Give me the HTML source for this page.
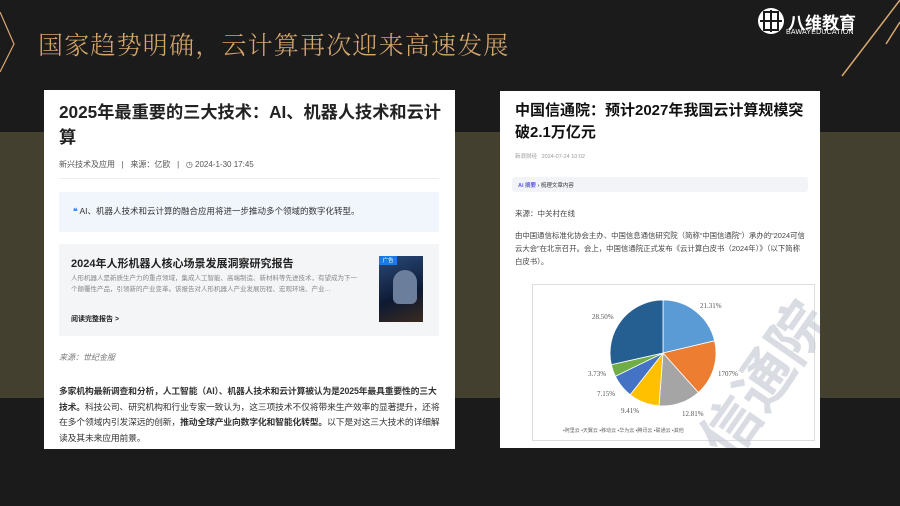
<!DOCTYPE html>
<html><head><meta charset="utf-8"><style>
*{margin:0;padding:0;box-sizing:border-box}
body{width:900px;height:506px;background:#1c1b1b;position:relative;overflow:hidden;font-family:"Liberation Sans","Noto Sans CJK SC",sans-serif}
.band{position:absolute;left:0;top:132px;width:900px;height:266px;background:#444030}
.title{position:absolute;left:38px;top:26px;font-size:25px;color:#d7a86e;letter-spacing:1.2px;font-family:"Noto Serif CJK SC","Noto Sans CJK SC",sans-serif;font-weight:300}
.card{position:absolute;background:#fff}
.c1{left:44px;top:90px;width:411px;height:359px}
.c2{left:500px;top:91px;width:320px;height:357px}
.abs{position:absolute}
</style></head><body>
<div class="band"></div>
<svg class="abs" style="left:0;top:0" width="900" height="506">
<polyline points="0,12 14,44 0,72" fill="none" stroke="#d7a86e" stroke-width="1.2"/>
<line x1="900" y1="0" x2="842" y2="76" stroke="#d7a86e" stroke-width="1.5"/>
<line x1="900" y1="22" x2="886" y2="44" stroke="#d7a86e" stroke-width="1.5"/>
<circle cx="771" cy="21" r="13" fill="#fff"/>
<rect x="764" y="12" width="14" height="18" fill="none" stroke="#1c1b1b" stroke-width="2"/>
<line x1="771" y1="10" x2="771" y2="32" stroke="#1c1b1b" stroke-width="2"/>
<line x1="760" y1="21" x2="782" y2="21" stroke="#1c1b1b" stroke-width="2"/>
</svg>
<div class="abs" style="left:788px;top:9px;color:#fff;font-size:17px;font-weight:bold">八维教育</div>
<div class="abs" style="left:786px;top:29px;color:#fff;font-size:7px;letter-spacing:0.2px">BAWAYEDUCATION</div>
<div class="title">国家趋势明确，云计算再次迎来高速发展</div>

<div class="card c1">
<div class="abs" style="left:15px;top:10px;width:385px;font-size:17.2px;font-weight:bold;color:#222;line-height:25px">2025年最重要的三大技术：AI、机器人技术和云计算</div>
<div class="abs" style="left:15px;top:69px;font-size:8px;color:#555">新兴技术及应用 &nbsp;&nbsp;|&nbsp;&nbsp; 来源：亿欧 &nbsp;&nbsp;|&nbsp;&nbsp; ◷ 2024-1-30 17:45</div>
<div class="abs" style="left:15px;top:88px;width:380px;height:1px;background:#eee"></div>
<div class="abs" style="left:15px;top:102px;width:380px;height:40px;background:#f1f6fc;font-size:8.5px;color:#333;padding:13px 0 0 14px"><b style="color:#3a8ee6">❝</b> AI、机器人技术和云计算的融合应用将进一步推动多个领域的数字化转型。</div>
<div class="abs" style="left:15px;top:154px;width:380px;height:92px;background:#f4f5f7">
<div class="abs" style="left:12px;top:11px;font-size:11px;font-weight:bold;color:#222">2024年人形机器人核心场景发展洞察研究报告</div>
<div class="abs" style="left:12px;top:29px;width:290px;font-size:6.5px;color:#888;line-height:11px">人形机器人是新质生产力的重点领域，集成人工智能、高端制造、新材料等先进技术，有望成为下一个颠覆性产品，引领新的产业变革。该报告对人形机器人产业发展历程、宏观环境、产业…</div>
<div class="abs" style="left:12px;top:70px;font-size:7px;color:#222;font-weight:bold">阅读完整报告 &gt;</div>
<div class="abs" style="left:320px;top:12px;width:44px;height:66px;background:linear-gradient(160deg,#2a4a7a,#0e1a33 60%,#3b2a1e)"><div style="width:18px;height:9px;background:#1a7ae6;color:#fff;font-size:5.5px;text-align:center">广告</div><div style="position:absolute;left:14px;top:14px;width:24px;height:34px;border-radius:12px 12px 6px 6px;background:#6b7f9c"></div></div>
</div>
<div class="abs" style="left:15px;top:262px;font-size:8px;color:#777;font-style:italic">来源：世纪金服</div>
<div class="abs" style="left:15px;top:294px;width:386px;font-size:8.8px;color:#333;line-height:15.5px;letter-spacing:-0.15px"><b>多家机构最新调查和分析，人工智能（AI）、机器人技术和云计算被认为是2025年最具重要性的三大技术。</b>科技公司、研究机构和行业专家一致认为，这三项技术不仅将带来生产效率的显著提升，还将在多个领域内引发深远的创新，<b>推动全球产业向数字化和智能化转型。</b>以下是对这三大技术的详细解读及其未来应用前景。</div>
</div>

<div class="card c2">
<div class="abs" style="left:15px;top:9px;width:300px;font-size:15px;font-weight:bold;color:#111;line-height:22px">中国信通院：预计2027年我国云计算规模突破2.1万亿元</div>
<div class="abs" style="left:15px;top:61px;font-size:5.5px;color:#999">新浪财经 &nbsp; 2024-07-24 10:02</div>
<div class="abs" style="left:12px;top:86px;width:296px;height:15px;background:#f3f4f7;border-radius:3px;font-size:5.5px;color:#333;padding:4px 0 0 6px"><span style="color:#5b5be0;font-weight:bold">Ai 摘要</span> › 梳理文章内容</div>
<div class="abs" style="left:15px;top:117px;font-size:7.5px;color:#444">来源：中关村在线</div>
<div class="abs" style="left:15px;top:138px;width:292px;font-size:7.4px;color:#444;line-height:13px">由中国通信标准化协会主办、中国信息通信研究院（简称“中国信通院”）承办的“2024可信云大会”在北京召开。会上，中国信通院正式发布《云计算白皮书（2024年）》（以下简称白皮书）。</div>
<div class="abs" style="left:32px;top:193px;width:283px;height:157px;border:1px solid #ddd;background:#fff"></div>
<svg class="abs" style="left:0;top:0" width="320" height="357" viewBox="500 91 320 357">
<text x="765" y="400" text-anchor="middle" font-size="58" fill="#c2c6d2" opacity="0.6" transform="rotate(-55 765 380)" font-family="Noto Sans CJK SC" font-weight="bold">信通院</text>
<path d="M663,353 L663,300 A53,53 0 0 1 714.6,340.8Z" fill="#5b9bd5" stroke="#fff" stroke-width="0.8"/>
<path d="M663,353 L714.6,340.8 A53,53 0 0 1 698.3,392.5Z" fill="#ed7d31" stroke="#fff" stroke-width="0.8"/>
<path d="M663,353 L698.3,392.5 A53,53 0 0 1 659,405.8Z" fill="#a5a5a5" stroke="#fff" stroke-width="0.8"/>
<path d="M663,353 L659,405.8 A53,53 0 0 1 630.2,394.7Z" fill="#ffc000" stroke="#fff" stroke-width="0.8"/>
<path d="M663,353 L630.2,394.7 A53,53 0 0 1 615.4,376.3Z" fill="#4472c4" stroke="#fff" stroke-width="0.8"/>
<path d="M663,353 L615.4,376.3 A53,53 0 0 1 611.3,364.6Z" fill="#70ad47" stroke="#fff" stroke-width="0.8"/>
<path d="M663,353 L611.3,364.6 A53,53 0 0 1 663,300Z" fill="#255e91" stroke="#fff" stroke-width="0.8"/>
<g font-size="7" fill="#555" font-family="Liberation Serif">
<text x="700" y="308">21.31%</text><text x="718" y="376">1707%</text><text x="682" y="416">12.81%</text>
<text x="621" y="413">9.41%</text><text x="597" y="396">7.15%</text><text x="588" y="376">3.73%</text><text x="592" y="319">28.50%</text></g>
<g font-size="5" fill="#666"><text x="563" y="432">▪阿里云 ▪天翼云 ▪移动云 ▪华为云 ▪腾讯云 ▪联通云 ▪其他</text></g>
</svg>
</div>
</body></html>
